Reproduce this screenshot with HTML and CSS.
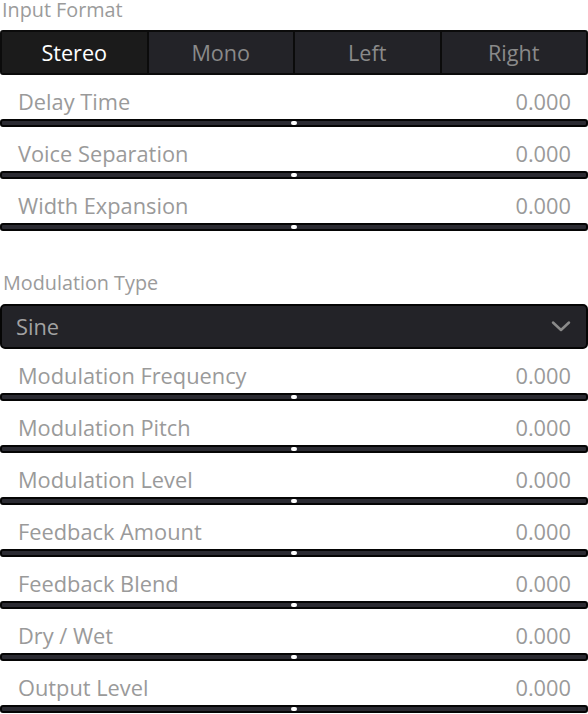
FILE: index.html
```html
<!DOCTYPE html>
<html>
<head>
<meta charset="utf-8">
<link rel="stylesheet" href="styles.css">
</head>
<body>
<div class="panel">
  <div class="section-label">Input Format</div>
  <div class="segmented">
    <div class="seg active">Stereo</div>
    <div class="seg">Mono</div>
    <div class="seg">Left</div>
    <div class="seg">Right</div>
  </div>
  <div class="slider"><div class="row"><span>Delay Time</span><span>0.000</span></div><div class="track"><i class="dot"></i></div></div>
  <div class="slider"><div class="row"><span>Voice Separation</span><span>0.000</span></div><div class="track"><i class="dot"></i></div></div>
  <div class="slider"><div class="row"><span>Width Expansion</span><span>0.000</span></div><div class="track"><i class="dot"></i></div></div>

  <div class="section-label second">Modulation Type</div>
  <div class="dropdown">
    <span>Sine</span>
    <svg class="chev" width="20" height="13" viewBox="0 0 20 13"><path d="M2 2.5 L10 10 L18 2.5" fill="none" stroke="#8a8a8a" stroke-width="2.5" stroke-linecap="round" stroke-linejoin="round"/></svg>
  </div>
  <div class="slider"><div class="row"><span>Modulation Frequency</span><span>0.000</span></div><div class="track"><i class="dot"></i></div></div>
  <div class="slider"><div class="row"><span>Modulation Pitch</span><span>0.000</span></div><div class="track"><i class="dot"></i></div></div>
  <div class="slider"><div class="row"><span>Modulation Level</span><span>0.000</span></div><div class="track"><i class="dot"></i></div></div>
  <div class="slider"><div class="row"><span>Feedback Amount</span><span>0.000</span></div><div class="track"><i class="dot"></i></div></div>
  <div class="slider"><div class="row"><span>Feedback Blend</span><span>0.000</span></div><div class="track"><i class="dot"></i></div></div>
  <div class="slider"><div class="row"><span>Dry / Wet</span><span>0.000</span></div><div class="track"><i class="dot"></i></div></div>
  <div class="slider"><div class="row"><span>Output Level</span><span>0.000</span></div><div class="track"><i class="dot"></i></div></div>
</div>
</body>
</html>
```
FILE: styles.css
```css
html, body {
  margin: 0;
  padding: 0;
  background: #ffffff;
}
body {
  font-family: "Open Sans", "DejaVu Sans", sans-serif;
  width: 588px;
  overflow: hidden;
}
.panel {
  display: flex;
  flex-direction: column;
}
.section-label {
  font-size: 19.8px;
  line-height: 19px;
  color: #9b9b9b;
  padding-left: 2px;
  height: 19px;
}
.section-label.second {
  margin-top: 40px;
  height: 24px;
  line-height: 24px;
  padding-left: 3px;
}
.segmented {
  margin-top: 11px;
  height: 41px;
  display: flex;
  border: 2px solid #0b0b0b;
  border-radius: 3px;
  background: #0b0b0b;
  gap: 2px;
}
.seg {
  flex: 1;
  display: flex;
  align-items: center;
  justify-content: center;
  background: #232328;
  color: #8a8a8a;
  font-size: 21.6px;
}
.seg.active {
  background: #1b1b1b;
  color: #ffffff;
}
.slider {
  display: flex;
  flex-direction: column;
  padding-top: 15px;
}
.row {
  display: flex;
  justify-content: space-between;
  height: 24px;
  line-height: 24px;
  font-size: 21.8px;
  color: #9a9a9a;
  padding: 0 17px 0 18px;
}
.track {
  margin-top: 5px;
  height: 4px;
  border: 2px solid #050505;
  border-radius: 3px;
  background: #2b2b32;
  display: flex;
  justify-content: center;
  align-items: center;
}
.dot {
  display: block;
  width: 6px;
  height: 4px;
  border-radius: 2px;
  background: #ffffff;
}
.dropdown {
  margin-top: 9px;
  height: 41px;
  border: 2px solid #050505;
  border-radius: 5px;
  background: #232328;
  display: flex;
  align-items: center;
  justify-content: space-between;
  padding: 0 15px 0 14px;
  color: #a2a2a2;
  font-size: 21.8px;
}
.chev {
  display: block;
}
```
